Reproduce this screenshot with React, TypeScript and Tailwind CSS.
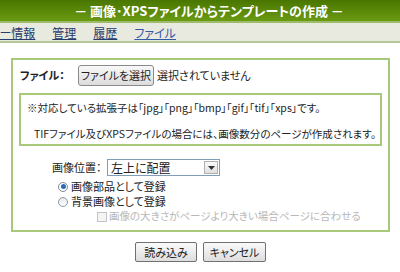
import React from "react";

const jp = { fontFamily: '"Noto Sans CJK JP", "Noto Sans", sans-serif', fontFeatureSettings: '"palt"' } as React.CSSProperties;

export default function App() {
  return (
    <div className="w-[400px] h-[272px] bg-white overflow-hidden text-[#222]" style={jp}>
      <div className="h-[21px] bg-gradient-to-b from-[#4a7600] to-[#6a9a12] flex items-center justify-center">
        <span className="text-white font-bold text-[13px] leading-none pl-[18px]">－ 画像･XPSファイルからテンプレートの作成 －</span>
      </div>
      <div className="h-[2px] bg-[#9cbc6a]" />
      <div className="h-[20px] bg-[#e8eadf] border-b-2 border-[#b4c896] flex items-center text-[12px] leading-none -ml-[12px] gap-[13px] pt-[2px]">
        <a className="underline text-[#2a3a6a]">ザー情報</a>
        <a className="underline text-[#2a3a6a] ml-[4px]">管理</a>
        <a className="underline text-[#2a3a6a] ml-[4px]">履歴</a>
        <a className="underline text-[#3458a8] ml-[4px]">ファイル</a>
      </div>
      <div className="ml-[11px] mr-[10px] mt-[15px] h-[174px] border-2 border-[#a8c87a] flex flex-col">
        <div className="flex items-center h-[20px] mt-[5px] text-[11px]">
          <span className="font-bold w-[65px] pl-[7px] leading-none">ファイル：</span>
          <span className="h-[21px] w-[76px] flex items-center justify-center border border-[#8a8a8a] rounded-[3px] bg-gradient-to-b from-[#f8f8f8] to-[#dcdcdc] leading-none">ファイルを選択</span>
          <span className="ml-[3px] leading-none">選択されていません</span>
        </div>
        <div className="mt-[8px] ml-[6px] mr-[6px] h-[53px] border-2 border-[#a8c87a] text-[10.5px] leading-none flex flex-col">
          <div className="mt-[8px] ml-[6px]">※対応している拡張子は「jpg」「png」「bmp」「gif」「tif」「xps」です。</div>
          <div className="mt-[15px] ml-[13px]">TIFファイル及びXPSファイルの場合には、画像数分のページが作成されます。</div>
        </div>
        <div className="flex items-center mt-[13px] ml-[39px] text-[11px] leading-none">
          <span className="w-[55px]">画像位置：</span>
          <div className="w-[113px] h-[17px] border border-[#7f9db9] flex items-center justify-between bg-white">
            <span className="pl-[3px] text-[12px]">左上に配置</span>
            <span className="w-[14px] h-[13px] mr-[1px] border border-[#b0b0b0] bg-gradient-to-b from-[#fafafa] to-[#e0e0e0] flex items-center justify-center">
              <svg width="7" height="4" viewBox="0 0 7 4"><path d="M0 0h7L3.5 4z" fill="#333" /></svg>
            </span>
          </div>
        </div>
        <div className="flex items-center mt-[3px] ml-[45px] text-[11px] leading-none h-[15px]">
          <span className="w-[10px] h-[10px] rounded-full border border-[#7a8a9a] bg-white flex items-center justify-center">
            <span className="w-[5px] h-[5px] rounded-full bg-[#2a6ab8]" />
          </span>
          <span className="ml-[3px]">画像部品として登録</span>
        </div>
        <div className="flex items-center ml-[45px] text-[11px] leading-none h-[15px]">
          <span className="w-[10px] h-[10px] rounded-full border border-[#8a9aaa] bg-gradient-to-b from-[#e8e8e8] to-white" />
          <span className="ml-[3px]">背景画像として登録</span>
        </div>
        <div className="flex items-center ml-[84px] text-[10.5px] leading-none h-[15px] text-[#b8b8b8]">
          <span className="w-[10px] h-[10px] border border-[#c4c4c4] bg-[#f4f4f4]" />
          <span className="ml-[2px]">画像の大きさがページより大きい場合ページに合わせる</span>
        </div>
      </div>
      <div className="flex justify-center gap-[6px] mt-[10px] ml-[1px] text-[11px] leading-none">
        <span className="w-[62px] h-[20px] border border-[#707070] rounded-[2px] bg-gradient-to-b from-[#fafafa] to-[#dedede] flex items-center justify-center">読み込み</span>
        <span className="w-[63px] h-[20px] border border-[#707070] rounded-[2px] bg-gradient-to-b from-[#fafafa] to-[#dedede] flex items-center justify-center">キャンセル</span>
      </div>
    </div>
  );
}
